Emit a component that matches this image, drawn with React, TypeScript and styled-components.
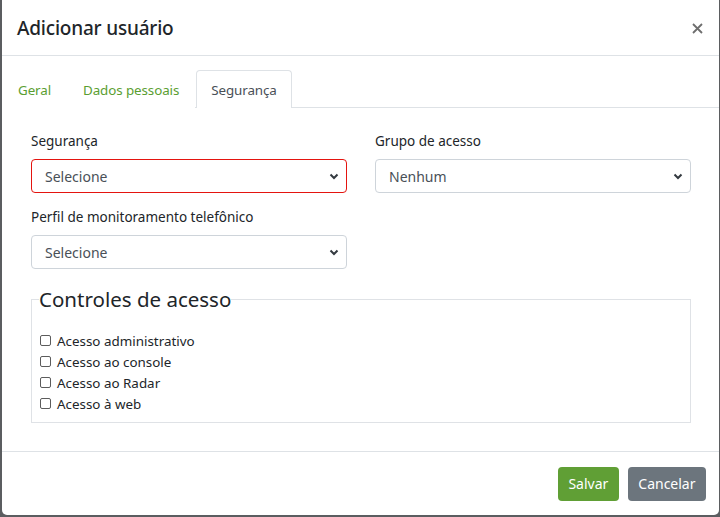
import React from "react";
import styled, { createGlobalStyle } from "styled-components";

const Global = createGlobalStyle`
  html, body { margin: 0; padding: 0; }
  body {
    background: #5b5d60;
    font-family: "Noto Sans", "Open Sans", sans-serif;
    width: 720px;
    height: 517px;
    overflow: hidden;
  }
  * { box-sizing: border-box; }
`;

const Backdrop = styled.div`
  padding-left: 2px;
  height: 517px;
`;

const Modal = styled.div`
  width: 717px;
  height: 515px;
  background: #fff;
  border-radius: 0 0 5px 5px;
  display: flex;
  flex-direction: column;
`;

const Header = styled.div`
  height: 56px;
  border-bottom: 1px solid #dee2e6;
  display: flex;
  align-items: center;
  justify-content: space-between;
  padding: 1px 14px 0 15px;
`;

const Title = styled.h5`
  margin: 0;
  font-size: 19px;
  font-weight: 500;
  color: #212529;
  letter-spacing: -0.2px;
`;

const Close = styled.button`
  border: 0;
  background: none;
  padding: 0;
  width: 16px;
  height: 16px;
  display: flex;
  align-items: center;
  justify-content: center;
  cursor: pointer;
`;

const TabNav = styled.div`
  display: flex;
  padding-top: 14px;
  border-bottom: 1px solid #dee2e6;
`;

const Tab = styled.div<{ $active?: boolean }>`
  height: 38px;
  padding: 1px ${(p) => (p.$active ? "14px" : "15px")} 0;
  margin-left: ${(p) => (p.$active ? "1px" : "0")};
  display: flex;
  align-items: center;
  font-size: 13.4px;
  letter-spacing: -0.1px;
  color: ${(p) => (p.$active ? "#495057" : "#5a9e31")};
  border: 1px solid ${(p) => (p.$active ? "#dee2e6" : "transparent")};
  border-bottom: 0;
  border-radius: 4px 4px 0 0;
  background: #fff;
  margin-bottom: -1px;
`;

const Body = styled.div`
  flex: 1;
  padding: 23px 28px 0 29px;
`;

const Grid = styled.div`
  display: grid;
  grid-template-columns: 316px 316px;
  column-gap: 28px;
  row-gap: 14px;
`;

const Field = styled.div`
  display: flex;
  flex-direction: column;
`;

const Label = styled.label`
  font-size: 13.5px;
  line-height: 21px;
  color: #212529;
  margin-bottom: 7px;
`;

const SelectWrap = styled.div<{ $invalid?: boolean }>`
  position: relative;
  height: 34px;
  border: 1px solid ${(p) => (p.$invalid ? "#e4140f" : "#ced4da")};
  border-radius: 4px;
  display: flex;
  align-items: center;
  padding-left: 13px;
  font-size: 14px;
  color: #495057;
  background: #fff;
`;

const Chevron = styled.svg`
  position: absolute;
  right: 7px;
  top: 13px;
`;

const Fieldset = styled.fieldset`
  margin: 17px 0 0 0;
  width: 660px;
  border: 1px solid #dfe2e6;
  padding: 0 7px 8px 7px;
  border-radius: 0;
`;

const Legend = styled.legend`
  font-size: 20.5px;
  line-height: 26px;
  color: #212529;
  padding: 0;
  margin-left: 0;
`;

const List = styled.div`
  padding-top: 18px;
  display: flex;
  flex-direction: column;
`;

const CheckRow = styled.label`
  display: flex;
  align-items: center;
  height: 21px;
  font-size: 13.4px;
  color: #212529;
`;

const Box = styled.span`
  width: 11px;
  height: 11px;
  border: 1px solid #5c5c5c;
  border-radius: 2px;
  margin-right: 6px;
  margin-left: 1px;
  background: #fff;
`;

const Footer = styled.div`
  height: 64px;
  border-top: 1px solid #dee2e6;
  display: flex;
  justify-content: flex-end;
  align-items: center;
  gap: 9px;
  padding: 0 13px 0 0;
`;

const Button = styled.button<{ $variant: "primary" | "secondary" }>`
  height: 34px;
  border: 0;
  border-radius: 4px;
  padding: 0 10.5px;
  font-family: inherit;
  font-size: 14px;
  color: #fff;
  background: ${(p) => (p.$variant === "primary" ? "#609f35" : "#6c757d")};
`;

const Select: React.FC<{ value: string; invalid?: boolean }> = ({ value, invalid }) => (
  <SelectWrap $invalid={invalid}>
    {value}
    <Chevron width="10" height="7" viewBox="0 0 10 7">
      <path d="M1.5 1.5 L5 5 L8.5 1.5" fill="none" stroke="#343a40" strokeWidth="2" />
    </Chevron>
  </SelectWrap>
);

export default function App() {
  const checks = [
    "Acesso administrativo",
    "Acesso ao console",
    "Acesso ao Radar",
    "Acesso à web",
  ];
  return (
    <>
      <Global />
      <Backdrop>
        <Modal>
          <Header>
            <Title>Adicionar usuário</Title>
            <Close aria-label="Fechar">
              <svg width="11" height="11" viewBox="0 0 11 11">
                <path d="M1 1 L10 10 M10 1 L1 10" stroke="#6e6e6e" strokeWidth="1.8" />
              </svg>
            </Close>
          </Header>
          <TabNav>
            <Tab>Geral</Tab>
            <Tab>Dados pessoais</Tab>
            <Tab $active>Segurança</Tab>
          </TabNav>
          <Body>
            <Grid>
              <Field>
                <Label>Segurança</Label>
                <Select value="Selecione" invalid />
              </Field>
              <Field>
                <Label>Grupo de acesso</Label>
                <Select value="Nenhum" />
              </Field>
              <Field>
                <Label>Perfil de monitoramento telefônico</Label>
                <Select value="Selecione" />
              </Field>
            </Grid>
            <Fieldset>
              <Legend>Controles de acesso</Legend>
              <List>
                {checks.map((c) => (
                  <CheckRow key={c}>
                    <Box />
                    {c}
                  </CheckRow>
                ))}
              </List>
            </Fieldset>
          </Body>
          <Footer>
            <Button $variant="primary">Salvar</Button>
            <Button $variant="secondary">Cancelar</Button>
          </Footer>
        </Modal>
      </Backdrop>
    </>
  );
}
